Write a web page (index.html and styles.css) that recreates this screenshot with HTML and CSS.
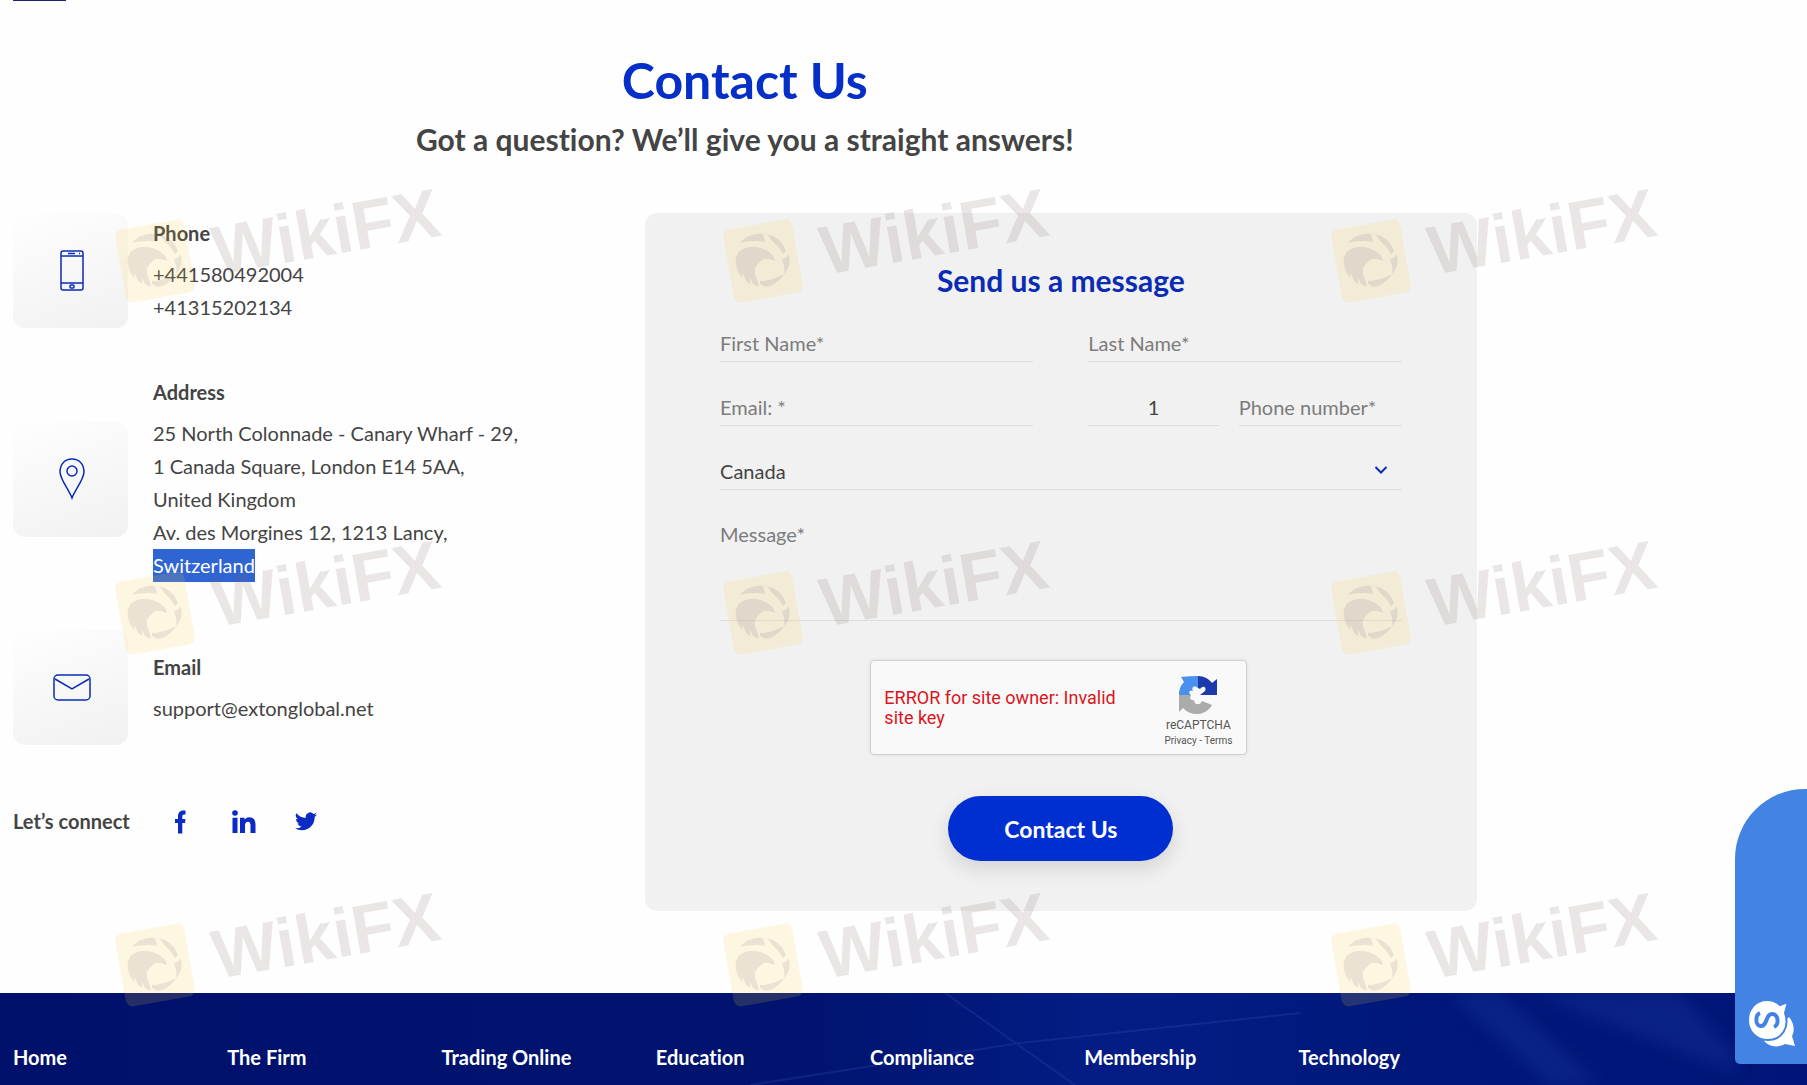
FILE: index.html
```
<!DOCTYPE html>
<html lang="en">
<head>
    <meta charset="UTF-8">
    <meta name="viewport" content="width=device-width, initial-scale=1.0">
    <title>Contact Us</title>
    <link rel="stylesheet" href="styles.css">
</head>
<body>
    <!-- Shared shapes -->
    <svg class="sprite" aria-hidden="true">
        <symbol id="badge" viewBox="-40 -40 80 80">
            <rect class="badge-bg" x="-35" y="-37" width="70" height="74" rx="7"/>
            <g class="badge-bird" transform="rotate(10)">
                <path d="M-23 -18C-17 -25 -9 -28 0 -27L2 -19C-6 -21 -15 -20 -23 -18Z"/>
                <path d="M4 -27C13 -25 20 -19 23 -10L20 -7C17 -12 14 -16 11 -18Z"/>
                <path d="M26 -6C28 1 26 8 21 13C22 8 21 3 19 -1Z"/>
                <path d="M-3 20C5 20 14 17 21 13C17 20 10 25 2 26L-3 23Z"/>
                <path d="M-25 -8C-19 -15 -9 -15 -3 -13C5 -11 11 -6 12 0L6 -2C2 -3 -1 -1 -3 1C-7 4 -9 8 -8 12C-7 18 -4 22 -4 26L-9 24C-11 21 -13 18 -13 15L-13 23C-16 21 -19 18 -20 12L-21 17C-24 13 -26 9 -27 4C-28 -1 -27 -5 -25 -8Z"/>
            </g>
        </symbol>
    </svg>

    <div class="tab-line"></div>

    <main class="container">
        <header class="heading">
            <h1>Contact Us</h1>
            <p>Got a question? We’ll give you a straight answers!</p>
        </header>

        <div class="contact">
            <!-- Contact details -->
            <div class="info">
                <div class="info-item">
                    <div class="info-icon">
                        <svg width="24" height="42" viewBox="0 0 24 42">
                            <rect x="1" y="1" width="22" height="39" rx="2"/>
                            <path d="M1 6H23M1 33H23M8 3.5H15M19 3.5H20"/>
                            <rect x="10" y="35" width="4" height="3" rx="1"/>
                        </svg>
                    </div>
                    <div class="info-text">
                        <h2>Phone</h2>
                        <p>+441580492004<br>+41315202134</p>
                    </div>
                </div>

                <div class="info-item">
                    <div class="info-icon">
                        <svg width="28" height="42" viewBox="0 0 28 42">
                            <path d="M14 40C11 32 2 21 2 14C2 6 7 1 14 1S26 6 26 14C26 21 17 32 14 40Z"/>
                            <circle cx="14" cy="13" r="5"/>
                        </svg>
                    </div>
                    <div class="info-text">
                        <h2>Address</h2>
                        <p>25 North Colonnade - Canary Wharf - 29,<br>1 Canada Square, London E14 5AA,<br>United Kingdom<br>Av. des Morgines 12, 1213 Lancy,<br><span class="selected">Switzerland</span></p>
                    </div>
                </div>

                <div class="info-item">
                    <div class="info-icon">
                        <svg width="40" height="28" viewBox="0 0 40 28">
                            <rect x="2" y="1" width="36" height="25" rx="4"/>
                            <path d="M3 5L20 15L37 5"/>
                        </svg>
                    </div>
                    <div class="info-text">
                        <h2>Email</h2>
                        <p>support@extonglobal.net</p>
                    </div>
                </div>

                <div class="social">
                    <span>Let’s connect</span>
                    <a href="#" aria-label="Facebook">
                        <svg width="24" height="24" viewBox="0 0 24 24">
                            <path d="M9 23.500V13H6V9H9V6.500C9 2.800 11 .5 14.200 .5H16.500V4.500H15C13.700 4.500 13.300 5.200 13.300 6.500V9H16.500L16 13H13.300V23.500Z"/>
                        </svg>
                    </a>
                    <a href="#" aria-label="LinkedIn">
                        <svg width="24" height="24" viewBox="0 0 24 24">
                            <circle cx="3" cy="3" r="2.800"/>
                            <path d="M.5 7.700H5.500V23H.5ZM8 7.700H12.600V9.800C13.500 8.200 15.200 7.300 17.300 7.300C21.800 7.300 23.500 10.200 23.500 14.800V23H18.500V15.800C18.500 13.500 18 11.800 16 11.800C13.700 11.800 13 13.500 13 15.800V23H8Z"/>
                        </svg>
                    </a>
                    <a href="#" aria-label="Twitter">
                        <svg width="24" height="24" viewBox="1 0 24 24">
                            <path d="M23 4.600a9 9 0 0 1-2.600.7 4.500 4.500 0 0 0 2-2.500 9 9 0 0 1-2.900 1.100 4.500 4.500 0 0 0-7.700 4.100A12.800 12.800 0 0 1 2.500 3.300a4.500 4.500 0 0 0 1.400 6 4.500 4.500 0 0 1-2-.6c0 2.200 1.500 4.100 3.600 4.500a4.500 4.500 0 0 1-2 .1 4.500 4.500 0 0 0 4.200 3.100A9 9 0 0 1 1 18.300a12.800 12.800 0 0 0 6.900 2c8.300 0 13-7 12.800-13.400A9 9 0 0 0 23 4.600z"/>
                        </svg>
                    </a>
                </div>
            </div>

            <!-- Form -->
            <form class="form">
                <h2>Send us a message</h2>
                <div class="form-row">
                    <input type="text" placeholder="First Name*" aria-label="First name">
                    <input type="text" placeholder="Last Name*" aria-label="Last name">
                </div>
                <div class="form-row">
                    <input type="email" placeholder="Email: *" aria-label="Email">
                    <div class="phone-group">
                        <input type="text" class="code" value="1" aria-label="Country code">
                        <input type="tel" placeholder="Phone number*" aria-label="Phone number">
                    </div>
                </div>
                <div class="select">
                    <select aria-label="Country">
                        <option>Canada</option>
                    </select>
                    <svg width="14" height="10" viewBox="0 0 14 10"><path d="M1.500 2L7 7.500L12.500 2"/></svg>
                </div>
                <textarea placeholder="Message*" aria-label="Message"></textarea>

                <div class="captcha">
                    <p class="captcha-error">ERROR for site owner: Invalid site key</p>
                    <div class="captcha-brand">
                        <svg width="40" height="40" viewBox="0 0 40 40">
                            <path fill="#4a90ee" d="M20 1V13C16 10 13 12 15 16C11 15 10 18 13 20H1C1 14 3 10 6 7L3 2Q12 1 20 1Z"/>
                            <path fill="#1c3aa9" d="M20 1C26 1 31 4 34 8L39 4V20H22L27 16C29 12 25 10 22 14L20 13Z"/>
                            <path fill="#ababab" d="M1 20H13C11 23 13 26 16 25C16 30 22 31 24 26L34 30C28 41 13 42 5 33L1 37Z"/>
                        </svg>
                        <span class="captcha-name">reCAPTCHA</span>
                        <span class="captcha-links"><a href="#">Privacy</a> - <a href="#">Terms</a></span>
                    </div>
                </div>

                <button type="submit">Contact Us</button>
            </form>
        </div>
    </main>

    <footer class="footer">
        <svg class="footer-bg" viewBox="0 0 1807 92" preserveAspectRatio="none" aria-hidden="true">
            <path d="M750 92L1020 50L1300 20M945 0L1075 92"/>
            <path class="beam" d="M1450 0H1500L1600 92H1550ZM1530 0H1680L1735 60V80Z"/>
        </svg>
        <nav class="footer-nav">
            <a href="#">Home</a>
            <a href="#">The Firm</a>
            <a href="#">Trading Online</a>
            <a href="#">Education</a>
            <a href="#">Compliance</a>
            <a href="#">Membership</a>
            <a href="#">Technology</a>
        </nav>
    </footer>

    <!-- Watermark layer -->
    <div class="watermarks" aria-hidden="true">
        <svg><use href="#badge" x="-40" y="-40" width="80" height="80" transform="translate(155 83) rotate(-10)"/><text transform="translate(217 97) rotate(-10)">WikiFX</text></svg>
        <svg><use href="#badge" x="-40" y="-40" width="80" height="80" transform="translate(155 83) rotate(-10)"/><text transform="translate(217 97) rotate(-10)">WikiFX</text></svg>
        <svg><use href="#badge" x="-40" y="-40" width="80" height="80" transform="translate(155 83) rotate(-10)"/><text transform="translate(217 97) rotate(-10)">WikiFX</text></svg>
        <svg><use href="#badge" x="-40" y="-40" width="80" height="80" transform="translate(155 83) rotate(-10)"/><text transform="translate(217 97) rotate(-10)">WikiFX</text></svg>
        <svg><use href="#badge" x="-40" y="-40" width="80" height="80" transform="translate(155 83) rotate(-10)"/><text transform="translate(217 97) rotate(-10)">WikiFX</text></svg>
        <svg><use href="#badge" x="-40" y="-40" width="80" height="80" transform="translate(155 83) rotate(-10)"/><text transform="translate(217 97) rotate(-10)">WikiFX</text></svg>
        <svg><use href="#badge" x="-40" y="-40" width="80" height="80" transform="translate(155 83) rotate(-10)"/><text transform="translate(217 97) rotate(-10)">WikiFX</text></svg>
        <svg><use href="#badge" x="-40" y="-40" width="80" height="80" transform="translate(155 83) rotate(-10)"/><text transform="translate(217 97) rotate(-10)">WikiFX</text></svg>
        <svg><use href="#badge" x="-40" y="-40" width="80" height="80" transform="translate(155 83) rotate(-10)"/><text transform="translate(217 97) rotate(-10)">WikiFX</text></svg>
    </div>

    <!-- Chat widget -->
    <button class="chat" type="button" aria-label="Open chat">
        <svg width="48" height="48" viewBox="0 0 48 48">
            <path fill="#fff" d="M41 17C46 23 47 31 44 36L47 46L37 44C30 48 21 47 16 41Z"/>
            <path fill="#fff" stroke="#4383e4" stroke-width="2" d="M19 0C25 0 29 2 32 5L40 2L37 13C42 27 34 40 20 40C8 40 0 31 0 20C0 9 8 0 19 0Z"/>
            <path fill="none" stroke="#4383e4" stroke-width="4" d="M12 13C7 15 7 26 13 26C20 26 17 14 24 14C31 14 31 25 26 27"/>
        </svg>
    </button>
</body>
</html>
```
FILE: styles.css
```
:root {
    --blue: #0a2cb4;
    --bright: #002fd1;
    --text: #444;
    --line: #dedede;
    --panel: #f1f1f1;
}

* {
    box-sizing: border-box;
}

body {
    margin: 0;
    position: relative;
    overflow-x: hidden;
    background-color: #fefefe;
    font-family: Lato, sans-serif;
    font-size: 20px;
    line-height: 33px;
    font-variant-ligatures: none;
    color: var(--text);
}

h1, h2, p {
    margin: 0;
}

.sprite {
    position: absolute;
    width: 0;
    height: 0;
}

.tab-line {
    width: 53px;
    height: 1px;
    margin-left: 13px;
    background: #1b2470;
}

.container {
    width: 81%;
    margin-left: 13px;
    padding: 49px 0 82px;
}

.heading {
    margin-bottom: 56px;
    text-align: center;
}

.heading h1 {
    margin-bottom: 11px;
    font-size: 50px;
    line-height: 60px;
    color: #052fc6;
}

.heading p {
    font-size: 30px;
    line-height: 36px;
    font-weight: bold;
}

.contact {
    display: grid;
    grid-template-columns: 38fr 50fr;
    align-items: start;
}

/* Contact details */
.info {
    display: flex;
    flex-direction: column;
    gap: 48px;
}

.info-item {
    display: flex;
    align-items: center;
    gap: 25px;
}

.info-icon {
    display: flex;
    align-items: center;
    justify-content: center;
    width: 115px;
    height: 115px;
    padding-left: 2px;
    border-radius: 12px;
    background: linear-gradient(160deg, #fefefe, #f2f1f1);
}

.info-icon svg {
    fill: none;
    stroke: var(--blue);
    stroke-width: 1.5;
}

.info-text h2 {
    margin-bottom: 8px;
    font-size: 20px;
    line-height: 33px;
}

.selected {
    display: inline-block;
    background: #2f65d3;
    color: #fff;
}

.social {
    display: flex;
    align-items: center;
    gap: 39px;
    margin-top: 12px;
    font-weight: bold;
}

.social a {
    display: flex;
}

.social svg {
    fill: #0b2bc4;
}

/* Form */
.form {
    display: flex;
    flex-direction: column;
    gap: 26px;
    padding: 49px 75px 50px;
    border-radius: 12px;
    background: var(--panel);
}

.form h2 {
    font-size: 30px;
    line-height: 36px;
    text-align: center;
    color: var(--blue);
}

.form-row {
    display: grid;
    grid-template-columns: 1fr 1fr;
    gap: 55px;
}

.phone-group {
    display: grid;
    grid-template-columns: 4fr 5fr;
    gap: 20px;
}

.form input,
.form select,
.form textarea {
    display: block;
    width: 100%;
    min-width: 0;
    height: 38px;
    padding: 0;
    border: 0;
    border-bottom: 1px solid var(--line);
    border-radius: 0;
    outline: 0;
    background: transparent;
    font: 20px/36px Lato, sans-serif;
    color: var(--text);
}

.form ::placeholder {
    color: #7c7c7c;
    opacity: 1;
}

.form .code {
    text-align: center;
}

.select {
    position: relative;
}

.form select {
    appearance: none;
}

.select svg {
    position: absolute;
    right: 14px;
    top: 13px;
    fill: none;
    stroke: var(--blue);
    stroke-width: 2;
    pointer-events: none;
}

.form textarea {
    height: 105px;
    resize: none;
}

.captcha {
    display: flex;
    align-items: center;
    justify-content: space-between;
    align-self: center;
    width: 377px;
    height: 95px;
    margin: 13px 4px 15px 0;
    padding: 0 14px 0 13px;
    border: 1px solid #d0d0d0;
    border-radius: 4px;
    background: #f9f9f9;
    box-shadow: 0 0 4px rgba(0, 0, 0, 0.08);
    font-family: Roboto, sans-serif;
}

.captcha-error {
    width: 240px;
    font-size: 18px;
    line-height: 20px;
    color: #d9151b;
}

.captcha-brand {
    display: flex;
    flex-direction: column;
    align-items: center;
    padding-top: 6px;
    color: #555;
}

.captcha-name {
    font-size: 12px;
    line-height: 20px;
}

.captcha-links {
    font-size: 10px;
    line-height: 12px;
}

.captcha-links a {
    color: inherit;
    text-decoration: none;
}

.form button {
    align-self: center;
    width: 225px;
    height: 65px;
    border: 0;
    border-radius: 33px;
    background: var(--bright);
    box-shadow: 0 8px 20px rgba(0, 0, 0, 0.12);
    font: bold 23px Lato, sans-serif;
    color: #fff;
    cursor: pointer;
}

/* Footer */
.footer {
    position: relative;
    padding: 48px 13px 11px;
    background: linear-gradient(to right, #00116c, #00146f 45%, #041d86 62%, #00187a 78%, #001577);
}

.footer-bg {
    position: absolute;
    inset: 0;
    width: 100%;
    height: 100%;
    fill: none;
    stroke: rgba(90, 120, 220, 0.16);
    stroke-width: 2;
}

.footer-bg .beam {
    fill: rgba(50, 80, 190, 0.2);
    stroke: none;
    filter: blur(8px);
}

.footer-nav {
    position: relative;
    display: grid;
    grid-template-columns: repeat(7, 1fr);
    width: 83vw;
}

.footer-nav a {
    color: #fff;
    font-weight: bold;
    text-decoration: none;
}

/* Watermark layer */
.watermarks {
    position: absolute;
    inset: 0;
    display: grid;
    grid-template-columns: repeat(3, 608px);
    grid-auto-rows: 352px;
    padding-top: 178px;
    overflow: hidden;
    pointer-events: none;
}

.watermarks svg {
    width: 608px;
    height: 352px;
    overflow: visible;
}

.watermarks text {
    font: bold 69px "Liberation Sans", sans-serif;
    fill: rgba(120, 95, 95, 0.15);
}

.badge-bg {
    fill: rgba(245, 205, 70, 0.15);
}

.badge-bird {
    fill: rgba(110, 95, 125, 0.13);
}

/* Chat widget */
.chat {
    position: fixed;
    right: 0;
    bottom: 21px;
    display: flex;
    align-items: flex-end;
    width: 72px;
    height: 275px;
    padding: 0 0 16px 13px;
    border: 0;
    border-radius: 70px 0 0 5px;
    background: #4383e4;
    cursor: pointer;
}
```
